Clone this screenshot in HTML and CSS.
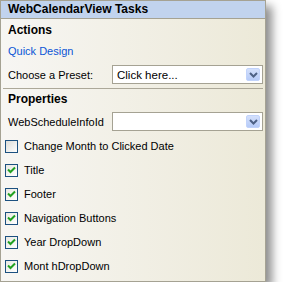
FILE: index.html
```html
<!DOCTYPE html>
<html lang="en">
<head>
    <meta charset="UTF-8">
    <title>WebCalendarView Tasks</title>
    <link rel="stylesheet" href="styles.css">
</head>
<body>
<div class="panel">
    <div class="header">WebCalendarView Tasks</div>

    <div class="section-title">Actions</div>
    <div class="link-row"><a class="link" href="#">Quick Design</a></div>
    <div class="field-row">
        <span class="field-label">Choose a Preset:</span>
        <div class="combo">
            <span class="combo-text">Click here...</span>
            <span class="combo-btn">
                <svg width="9" height="6" viewBox="0 0 9 6"><path d="M1 1 L4.5 4.5 L8 1" fill="none" stroke="#4d6185" stroke-width="2"/></svg>
            </span>
        </div>
    </div>

    <div class="separator"></div>

    <div class="section-title small">Properties</div>
    <div class="field-row info">
        <span class="field-label">WebScheduleInfoId</span>
        <div class="combo">
            <span class="combo-text"></span>
            <span class="combo-btn">
                <svg width="9" height="6" viewBox="0 0 9 6"><path d="M1 1 L4.5 4.5 L8 1" fill="none" stroke="#4d6185" stroke-width="2"/></svg>
            </span>
        </div>
    </div>

    <!-- checkbox list -->
    <div class="check-row">
        <span class="box"></span>
        <span>Change Month to Clicked Date</span>
    </div>
    <div class="check-row">
        <span class="box checked"><svg width="9" height="8" viewBox="0 0 9 8"><path d="M1 3.5 L3.5 6 L8 1.5" fill="none" stroke="#21a121" stroke-width="2"/></svg></span>
        <span>Title</span>
    </div>
    <div class="check-row">
        <span class="box checked"><svg width="9" height="8" viewBox="0 0 9 8"><path d="M1 3.5 L3.5 6 L8 1.5" fill="none" stroke="#21a121" stroke-width="2"/></svg></span>
        <span>Footer</span>
    </div>
    <div class="check-row">
        <span class="box checked"><svg width="9" height="8" viewBox="0 0 9 8"><path d="M1 3.5 L3.5 6 L8 1.5" fill="none" stroke="#21a121" stroke-width="2"/></svg></span>
        <span>Navigation Buttons</span>
    </div>
    <div class="check-row">
        <span class="box checked"><svg width="9" height="8" viewBox="0 0 9 8"><path d="M1 3.5 L3.5 6 L8 1.5" fill="none" stroke="#21a121" stroke-width="2"/></svg></span>
        <span>Year DropDown</span>
    </div>
    <div class="check-row">
        <span class="box checked"><svg width="9" height="8" viewBox="0 0 9 8"><path d="M1 3.5 L3.5 6 L8 1.5" fill="none" stroke="#21a121" stroke-width="2"/></svg></span>
        <span>Mont hDropDown</span>
    </div>
</div>
</body>
</html>
```

FILE: styles.css
```css
* {
    margin: 0;
    padding: 0;
    box-sizing: border-box;
}

body {
    background: #ffffff;
    font-family: "Liberation Sans", Arial, sans-serif;
    font-size: 11px;
    color: #000000;
}

.panel {
    width: 266px;
    height: 282px;
    border: 1px solid #a5a293;
    background: linear-gradient(to right, #f7f6f3, #ece9d8);
    box-shadow: 6px 6px 9px rgba(0, 0, 0, 0.45);
}

.header {
    height: 18px;
    line-height: 17px;
    padding-left: 7px;
    background: #c1d3ee;
    border-bottom: 1px solid #a5a293;
    font-weight: bold;
    font-size: 12px;
}

.section-title {
    height: 22px;
    line-height: 22px;
    padding-left: 7px;
    font-weight: bold;
    font-size: 12px;
}

.section-title.small {
    height: 20px;
    line-height: 20px;
}

.link-row {
    height: 20px;
    line-height: 20px;
    padding-left: 7px;
}

.link {
    color: #0b55d6;
    text-decoration: none;
}

.field-row {
    display: flex;
    align-items: center;
    height: 27px;
    padding-left: 7px;
}

.field-row.info {
    height: 25px;
}

.field-label {
    width: 104px;
}

.combo {
    display: flex;
    align-items: center;
    width: 151px;
    height: 19px;
    background: #ffffff;
    border: 1px solid #a5a293;
    padding: 0 2px 0 4px;
}

.combo-text {
    flex: 1;
    font-size: 11.5px;
}

.combo-btn {
    display: flex;
    align-items: center;
    justify-content: center;
    width: 14px;
    height: 13px;
    background: linear-gradient(#d4e0fb, #b6cbf8);
    border: 1px solid #c1d3fb;
    border-radius: 2px;
}

.separator {
    height: 1px;
    margin: 0 2px;
    background: #aca899;
}

.check-row {
    display: flex;
    align-items: center;
    height: 24px;
    padding-left: 4px;
}

.box {
    display: flex;
    align-items: center;
    justify-content: center;
    width: 13px;
    height: 13px;
    margin-right: 6px;
    border: 1px solid #1c5180;
    background: linear-gradient(135deg, #dcdcd7, #ffffff);
}

.box.checked {
    background: linear-gradient(135deg, #e8e8e2, #ffffff);
}
```
